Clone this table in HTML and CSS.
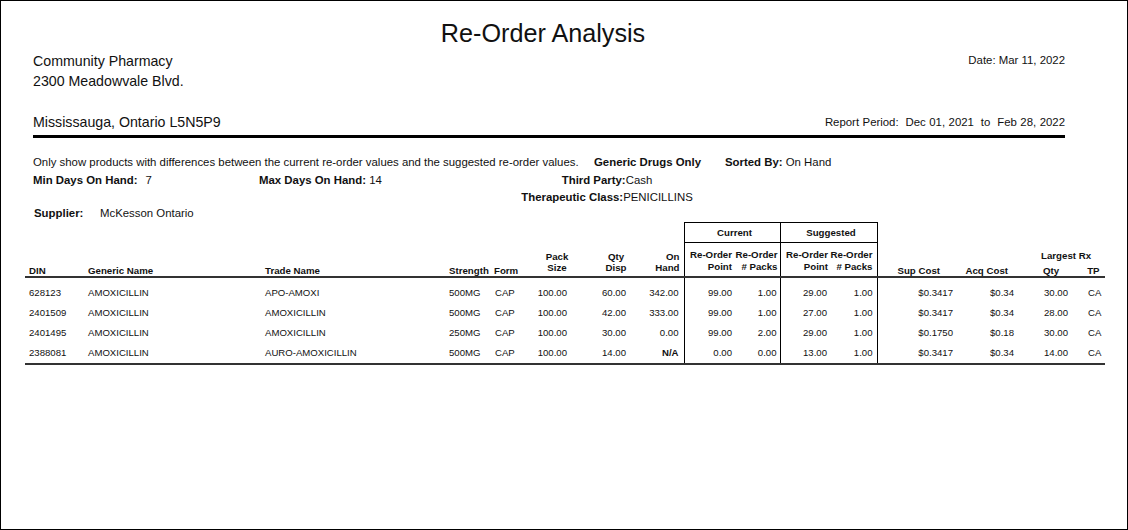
FILE: index.html
```html
<!DOCTYPE html>
<html lang="en">
<head>
<meta charset="utf-8">
<title>Re-Order Analysis</title>
<link rel="stylesheet" href="styles.css">
</head>
<body>
<div class="page">
  <h1 class="title">Re-Order Analysis</h1>
  <header class="head">
    <div class="addr">
      <div>Community Pharmacy</div>
      <div>2300 Meadowvale Blvd.</div>
      <div class="city">Mississauga, Ontario L5N5P9</div>
    </div>
    <div class="meta">
      <div>Date: Mar 11, 2022</div>
      <div>Report Period:&nbsp; Dec 01, 2021 &nbsp;to&nbsp; Feb 28, 2022</div>
    </div>
  </header>

  <section class="filters">
    <div class="frow first">
      <span>Only show products with differences between the current re-order values and the suggested re-order values.</span>
      <span class="b">Generic Drugs Only</span>
      <span><b>Sorted By:</b> On Hand</span>
    </div>
    <div class="frow second">
      <span><b>Min Days On Hand:</b><span class="gap">7</span></span>
      <span><b>Max Days On Hand:</b> 14</span>
      <span class="mid"><b>Third Party:</b>Cash</span>
    </div>
    <div class="frow third">
      <span></span>
      <span></span>
      <span class="mid"><b>Therapeutic Class:</b>PENICILLINS</span>
    </div>
    <div class="supplier"><b class="lbl">Supplier:</b>McKesson Ontario</div>
  </section>

  <table class="grid">
    <colgroup>
      <col style="width:60px"><col style="width:176px"><col style="width:184px"><col style="width:47px">
      <col style="width:36px"><col style="width:42px"><col style="width:58px"><col style="width:56px">
      <col style="width:50px"><col style="width:46px"><col style="width:50px"><col style="width:47px">
      <col style="width:78px"><col style="width:61px"><col style="width:56px"><col style="width:33px">
    </colgroup>
    <thead>
      <tr class="grp">
        <th colspan="8"></th>
        <th colspan="2" class="g">Current</th>
        <th colspan="2" class="g">Suggested</th>
        <th colspan="4"></th>
      </tr>
      <tr class="hd">
        <th class="l pl4">DIN</th>
        <th class="l pl3">Generic Name</th>
        <th class="l pl4">Trade Name</th>
        <th class="l pl4">Strength</th>
        <th class="l pl2">Form</th>
        <th class="two pack">Pack<br>Size</th>
        <th class="two qty">Qty<br>Disp</th>
        <th class="two r onhand">On<br>Hand</th>
        <th class="ro r cur">Re-Order<br>Point</th>
        <th class="ro r pk">Re-Order<br># Packs</th>
        <th class="ro r cur sug">Re-Order<br>Point</th>
        <th class="ro r pk sugpk">Re-Order<br># Packs</th>
        <th class="r sup">Sup Cost</th>
        <th class="r acq">Acq Cost</th>
        <th colspan="2" class="lrx">
          <div class="lrx-title">Largest Rx</div>
          <div class="lrx-sub"><span>Qty</span><span>TP</span></div>
        </th>
      </tr>
    </thead>
    <tbody>
      <tr><td>628123</td><td>AMOXICILLIN</td><td>APO-AMOXI</td><td>500MG</td><td>CAP</td><td>100.00</td><td>60.00</td><td>342.00</td><td>99.00</td><td>1.00</td><td>29.00</td><td>1.00</td><td>$0.3417</td><td>$0.34</td><td>30.00</td><td>CA</td></tr>
      <tr><td>2401509</td><td>AMOXICILLIN</td><td>AMOXICILLIN</td><td>500MG</td><td>CAP</td><td>100.00</td><td>42.00</td><td>333.00</td><td>99.00</td><td>1.00</td><td>27.00</td><td>1.00</td><td>$0.3417</td><td>$0.34</td><td>28.00</td><td>CA</td></tr>
      <tr><td>2401495</td><td>AMOXICILLIN</td><td>AMOXICILLIN</td><td>250MG</td><td>CAP</td><td>100.00</td><td>30.00</td><td>0.00</td><td>99.00</td><td>2.00</td><td>29.00</td><td>1.00</td><td>$0.1750</td><td>$0.18</td><td>30.00</td><td>CA</td></tr>
      <tr><td>2388081</td><td>AMOXICILLIN</td><td>AURO-AMOXICILLIN</td><td>500MG</td><td>CAP</td><td>100.00</td><td>14.00</td><td class="na">N/A</td><td>0.00</td><td>0.00</td><td>13.00</td><td>1.00</td><td>$0.3417</td><td>$0.34</td><td>14.00</td><td>CA</td></tr>
    </tbody>
  </table>
</div>
</body>
</html>
```

FILE: styles.css
```css
html, body {
  margin: 0;
  padding: 0;
  background: #fff;
}

.page {
  box-sizing: border-box;
  width: 1128px;
  height: 530px;
  border: 1px solid #000;
  padding-top: 17px;
  font-family: "Liberation Sans", Arial, sans-serif;
  color: #111;
  overflow: hidden;
}

.title {
  margin: 0;
  padding-right: 42px;
  font-size: 25.2px;
  font-weight: normal;
  line-height: 30px;
  text-align: center;
}

.head {
  display: flex;
  justify-content: space-between;
  margin: 3px 62px 0 32px;
  padding-bottom: 3px;
  border-bottom: 3px solid #000;
}

.addr {
  font-size: 14.2px;
  line-height: 20px;
}

.addr .city {
  margin-top: 21px;
}

.meta {
  display: flex;
  flex-direction: column;
  justify-content: space-between;
  padding: 2px 0 3px;
  font-size: 11.4px;
  line-height: 14px;
  text-align: right;
}

.meta div:last-child {
  word-spacing: 0.3px;
}

.filters {
  margin: 16px 0 0 32px;
  font-size: 11.4px;
  line-height: 16px;
  white-space: nowrap;
}

.frow {
  display: grid;
}

.frow.first {
  grid-template-columns: 561px 131px auto;
}

.frow.second,
.frow.third {
  grid-template-columns: 226px 222px 252px;
}

.frow.second {
  margin-top: 2px;
}

.frow.third {
  margin-top: 1px;
}

.frow .b,
.frow b,
.supplier b {
  font-weight: bold;
}

.frow .gap {
  margin-left: 8px;
}

.frow .mid {
  text-align: center;
}

.supplier {
  padding-left: 1px;
}

.supplier .lbl {
  display: inline-block;
  width: 66px;
}

/* ---------- table ---------- */

.grid {
  border-collapse: collapse;
  table-layout: fixed;
  width: 1080px;
  margin: 1px 0 0 24px;
  font-size: 9.6px;
  color: #111;
}

.grid th {
  padding: 0;
  font-size: 9.7px;
  font-weight: bold;
  line-height: 11.5px;
  vertical-align: bottom;
  white-space: nowrap;
}

.grp th {
  height: 18px;
  vertical-align: middle;
}

.grp .g {
  border: 1px solid #000;
  text-align: center;
  padding-left: 5px;
  padding-top: 1px;
}

.hd th {
  height: 30px;
  border-bottom: 2px solid #333;
}

.hd th.l { text-align: left; }
.hd th.r { text-align: right; }
.hd .pl2 { padding-left: 2px; }
.hd .pl3 { padding-left: 3px; }
.hd .pl4 { padding-left: 4px; }

.hd .two {
  padding-bottom: 3px;
  line-height: 11px;
}

.hd .pack {
  text-align: center;
  padding-left: 16px;
}

.hd .qty {
  text-align: center;
  padding-left: 34px;
}

.hd .onhand {
  padding-right: 4px;
}

.hd .ro {
  line-height: 12px;
  padding-bottom: 3px;
}

.hd .cur { padding-right: 2px; }
.hd .pk { padding-right: 2px; }
.hd .sugpk { padding-right: 4px; }
.hd .sup { padding-right: 15px; }
.hd .acq { padding-right: 8px; }

.hd .lrx {
  text-align: left;
}

.lrx-title {
  padding-left: 25px;
}

.lrx-sub {
  display: flex;
  margin-top: 3px;
  padding-left: 27px;
}

.lrx-sub span:last-child {
  margin-left: 28px;
}

.grid th:nth-child(9),
.grid th:nth-child(11),
.grid td:nth-child(9),
.grid td:nth-child(11) {
  border-left: 1px solid #000;
}

.grid th:nth-child(12),
.grid td:nth-child(12) {
  border-right: 1px solid #000;
}

.grid td {
  padding: 0;
  height: 20px;
  line-height: 20px;
  white-space: nowrap;
  text-align: right;
}

.grid tbody tr:first-child td {
  padding-top: 5px;
}

.grid tbody tr:last-child td {
  border-bottom: 2px solid #333;
}

.grid td:nth-child(1) { text-align: left; padding-left: 4px; }
.grid td:nth-child(2) { text-align: left; padding-left: 3px; }
.grid td:nth-child(3) { text-align: left; padding-left: 4px; }
.grid td:nth-child(4) { text-align: left; padding-left: 4px; }
.grid td:nth-child(5) { text-align: left; padding-left: 3px; }
.grid td:nth-child(6) { padding-right: 3px; }
.grid td:nth-child(7) { padding-right: 2px; }
.grid td:nth-child(8) { padding-right: 5px; }
.grid td:nth-child(9) { padding-right: 2px; }
.grid td:nth-child(10) { padding-right: 3px; }
.grid td:nth-child(11) { padding-right: 3px; }
.grid td:nth-child(12) { padding-right: 4px; }
.grid td:nth-child(13) { padding-right: 2px; }
.grid td:nth-child(14) { padding-right: 2px; }
.grid td:nth-child(15) { padding-right: 4px; }
.grid td:nth-child(16) { text-align: left; padding-left: 16px; }

.grid td.na {
  font-weight: bold;
}
```
